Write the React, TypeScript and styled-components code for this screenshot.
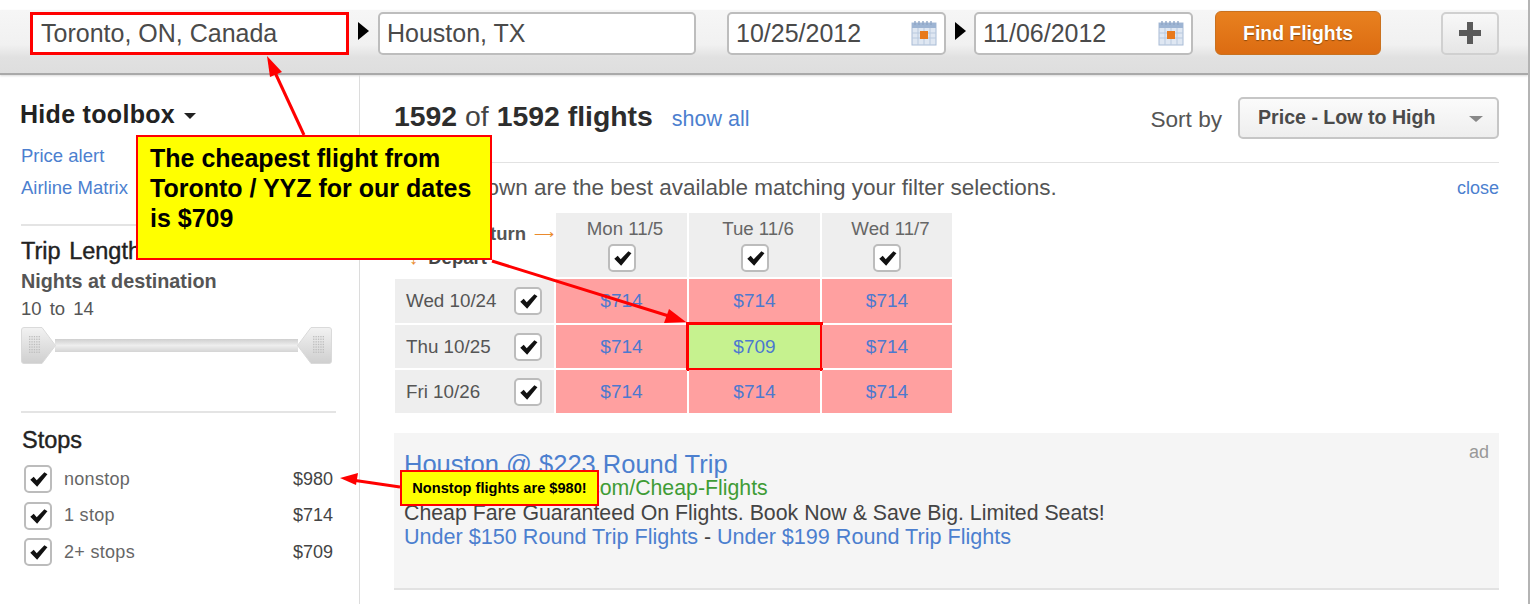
import { Fragment } from "react";
import styled, { createGlobalStyle } from "styled-components";

const GlobalStyle = createGlobalStyle`
  html, body {
    margin: 0;
    padding: 0;
    background: #fff;
  }
  body {
    font-family: "Liberation Sans", Arial, sans-serif;
    color: #333;
  }
`;

const Page = styled.div`
  position: relative;
  width: 1530px;
  height: 604px;
  padding-top: 10px;
  box-sizing: border-box;
  border-right: 2px solid #b4b4b4;
  overflow: hidden;
`;

const Toolbar = styled.div`
  display: flex;
  align-items: center;
  height: 65px;
  padding: 0 0 17px 30px;
  box-sizing: border-box;
  background: linear-gradient(#f6f6f6, #f1f1f1 55%, #e1e1e1 75%, #dedede);
  border-bottom: 2px solid #a9a9a9;
  box-shadow: 0 1px 2px rgba(0, 0, 0, 0.15);
`;

const Field = styled.div<{ $w: number; $hot?: boolean; $before?: number }>`
  display: flex;
  align-items: center;
  justify-content: space-between;
  width: ${(p) => p.$w}px;
  height: 43px;
  margin-left: ${(p) => p.$before ?? 0}px;
  box-sizing: border-box;
  padding: 0 7px 0 ${(p) => (p.$hot ? 8 : 7)}px;
  background: #fff;
  border: ${(p) => (p.$hot ? "3px solid #f00" : "2px solid #bdbdbd")};
  border-radius: ${(p) => (p.$hot ? 0 : 5)}px;
  font-size: 25px;
  color: #4a4a4a;
`;

const Triangle = styled.div<{ $left: number; $right: number }>`
  width: 0;
  height: 0;
  margin: -4px ${(p) => p.$right}px 0 ${(p) => p.$left}px;
  border-top: 9px solid transparent;
  border-bottom: 9px solid transparent;
  border-left: 11px solid #000;
`;

const FindButton = styled.div`
  display: flex;
  align-items: center;
  justify-content: center;
  width: 166px;
  height: 44px;
  margin-left: 22px;
  box-sizing: border-box;
  background: linear-gradient(#e8811f, #dc6c12);
  border: 1px solid #c9711f;
  border-radius: 6px;
  color: #fff;
  font-size: 19.4px;
  font-weight: 700;
  text-shadow: 0 1px 1px #8a4a10;
`;

const PlusButton = styled.div`
  display: flex;
  align-items: center;
  justify-content: center;
  width: 58px;
  height: 43px;
  margin-left: 60px;
  box-sizing: border-box;
  background: linear-gradient(#f8f8f8, #e6e6e6);
  border: 2px solid #d0d0d0;
  border-radius: 5px;
`;

const Body = styled.div`
  display: flex;
`;

const Sidebar = styled.aside`
  width: 360px;
  height: 530px;
  box-sizing: border-box;
  padding: 26px 23px 0 21px;
  border-right: 1px solid #dcdcdc;
`;

const ToolboxTitle = styled.div`
  display: flex;
  align-items: center;
  gap: 9px;
  margin-left: -1px;
  font-size: 25px;
  line-height: 26px;
  letter-spacing: 0.3px;
  font-weight: 700;
  color: #222;

  &::after {
    content: "";
    margin-top: 3px;
    border-top: 6px solid #222;
    border-left: 6px solid transparent;
    border-right: 6px solid transparent;
  }
`;

const SideLinks = styled.div`
  margin-top: 13px;
`;

const SideLink = styled.a`
  display: block;
  font-size: 18.5px;
  line-height: 32px;
  color: #4c7fcf;
`;

const Rule = styled.div<{ $top: number }>`
  height: 2px;
  margin-top: ${(p) => p.$top}px;
  background: #e4e4e4;
`;

const SectionTitle = styled.h3<{ $top: number; $left?: number }>`
  margin: ${(p) => p.$top}px 0 0 ${(p) => p.$left ?? 0}px;
  font-size: 23.5px;
  line-height: 26px;
  word-spacing: 2px;
  font-weight: 400;
  color: #222;
  -webkit-text-stroke: 0.4px #222;
`;

const SubLabel = styled.div`
  margin-top: 6px;
  font-size: 19.8px;
  line-height: 22px;
  font-weight: 700;
  color: #555;
`;

const RangeLabel = styled.div`
  margin-top: 6px;
  font-size: 18.5px;
  line-height: 22px;
  word-spacing: 3px;
  color: #555;
`;

const Slider = styled.div`
  display: flex;
  align-items: center;
  width: 311px;
  height: 37px;
  margin-top: 7px;
`;

const SliderTrack = styled.div`
  flex: 1;
  height: 13px;
  margin: 0 -1px;
  background: linear-gradient(#cfcfcf, #eeeeee 50%, #d4d4d4);
`;

const HandleSvg = styled.svg<{ $flip?: boolean }>`
  position: relative;
  flex: none;
  transform: ${(p) => (p.$flip ? "scaleX(-1)" : "none")};
`;

const StopList = styled.div`
  display: grid;
  grid-auto-rows: 36.5px;
  margin: 8px 3px 0 3px;
`;

const StopRow = styled.div`
  display: flex;
  align-items: center;
  font-size: 18px;
  color: #666;
`;

const StopName = styled.span`
  flex: 1;
  margin-left: 12px;
  letter-spacing: 0.3px;
`;

const StopPrice = styled.span`
  color: #444;
`;

const CheckBox = styled.span`
  display: inline-flex;
  flex: none;
  align-items: center;
  justify-content: center;
  width: 28px;
  height: 28px;
  box-sizing: border-box;
  background: #fff;
  border: 2px solid #bcbcbc;
  border-radius: 5px;
`;

const Main = styled.main`
  width: 1105px;
  margin-left: 34px;
`;

const ResultsHead = styled.div`
  display: flex;
  align-items: center;
  height: 42px;
  margin-top: 22px;
`;

const Count = styled.div`
  padding-bottom: 4px;
  font-size: 28.4px;
  color: #444;

  b {
    color: #2d2d2d;
  }
`;

const ShowAll = styled.a`
  flex: 1;
  margin-left: 19px;
  padding-top: 3px;
  font-size: 21.5px;
  color: #4c7fcf;
`;

const SortLabel = styled.span`
  margin-right: 16px;
  padding-top: 3px;
  font-size: 22.6px;
  color: #555;
`;

const SortSelect = styled.div`
  display: flex;
  align-items: center;
  justify-content: space-between;
  width: 261px;
  height: 42px;
  box-sizing: border-box;
  padding: 0 14px 2px 18px;
  background: linear-gradient(#fbfbfb, #eeeeee);
  border: 2px solid #c6c6c6;
  border-radius: 5px;
  font-size: 19.6px;
  font-weight: 700;
  color: #4a4a4a;

  &::after {
    content: "";
    margin-top: 3px;
    border-top: 6px solid #888;
    border-left: 7px solid transparent;
    border-right: 7px solid transparent;
  }
`;

const NoticeRow = styled.div`
  display: flex;
  align-items: center;
  justify-content: space-between;
  height: 51px;
  margin-top: 23px;
  border-top: 1px solid #e2e2e2;
  box-sizing: border-box;
  font-size: 22.5px;
  color: #555;
`;

const CloseLink = styled.a`
  font-size: 18px;
  color: #4c7fcf;
`;

const Matrix = styled.div`
  display: grid;
  grid-template-columns: 159px 131px 131px 130px;
  grid-template-rows: 64px 44px 43px 43px;
  gap: 2px;
  width: 559px;
  margin-left: 1px;
`;

const Corner = styled.div`
  display: flex;
  flex-direction: column;
  justify-content: flex-end;
  padding-bottom: 11px;
  box-sizing: border-box;
  font-size: 18.5px;
  font-weight: 700;
  color: #444;
`;

const ReturnLabel = styled.div`
  display: flex;
  justify-content: flex-end;
  align-items: center;
  gap: 8px;
  margin-bottom: 5px;
  color: #555;
`;

const DepartLabel = styled.div`
  display: flex;
  align-items: center;
  gap: 10px;
  padding-left: 14px;
  line-height: 16px;
`;

const ReturnArrow = styled.span`
  font-size: 14px;
  font-weight: 400;
  color: #ea8a2d;
`;

const DepartArrow = styled.span`
  font-weight: 400;
  color: #ea8a2d;
`;

const DayHead = styled.div`
  display: flex;
  flex-direction: column;
  align-items: center;
  gap: 4px;
  padding-top: 5px;
  box-sizing: border-box;
  background: #eeeeee;
  font-size: 18.7px;
  text-indent: 7px;
  color: #666;
`;

const DayRow = styled.div`
  display: flex;
  align-items: center;
  justify-content: space-between;
  padding: 0 12px 0 11px;
  background: #eeeeee;
  font-size: 18.8px;
  color: #555;
`;

const PriceCell = styled.a<{ $best?: boolean }>`
  display: flex;
  align-items: center;
  justify-content: center;
  background: ${(p) => (p.$best ? "#c6f28f" : "#ffa0a0")};
  outline: ${(p) => (p.$best ? "3px solid #f00" : "none")};
  font-size: 19px;
  color: #4c79cf;
`;

const AdBox = styled.section`
  display: flex;
  justify-content: space-between;
  height: 157px;
  margin-top: 20px;
  box-sizing: border-box;
  padding: 8px 10px 0 10px;
  background: #f5f5f5;
  border-bottom: 2px solid #e2e2e2;
`;

const AdBody = styled.div`
  padding-top: 11px;
  font-size: 21.3px;
  line-height: 24.5px;
`;

const AdTitle = styled.a`
  display: block;
  font-size: 25.5px;
  line-height: 24px;
  color: #4c7fcf;
`;

const AdUrl = styled.div`
  color: #3f9c35;
`;

const AdText = styled.div`
  color: #444;
`;

const AdLink = styled.a`
  font-size: 21.6px;
  color: #4c7fcf;
`;

const AdTag = styled.span`
  font-size: 18px;
  line-height: 22px;
  color: #999;
`;

const Callout = styled.div`
  position: absolute;
  left: 136px;
  top: 135px;
  width: 356px;
  height: 125px;
  box-sizing: border-box;
  padding: 6px 0 0 12px;
  background: #ff0;
  border: 2px solid #f00;
  font-size: 25px;
  line-height: 30px;
  font-weight: 700;
  color: #000;
`;

const SmallCallout = styled.div`
  position: absolute;
  left: 400px;
  top: 470px;
  display: flex;
  align-items: center;
  justify-content: center;
  width: 199px;
  height: 36px;
  box-sizing: border-box;
  background: #ff0;
  border: 2px solid #f00;
  font-size: 14.6px;
  font-weight: 700;
  color: #000;
`;

const ArrowLayer = styled.svg`
  position: absolute;
  left: 0;
  top: 0;
  pointer-events: none;
`;

function Tick() {
  return (
    <svg width="26" height="26" viewBox="0 0 28 28">
      <path d="M5 15 L9 11.5 L12.5 15.5 L21.5 6 L25 8.5 L13 23 Z" fill="#111" />
    </svg>
  );
}

function CalendarIcon() {
  return (
    <svg width="26" height="26" viewBox="0 0 26 26">
      <rect x="1" y="3" width="24" height="22" fill="#dfe7f2" stroke="#a9bcd6" />
      <rect x="1" y="3" width="24" height="5" fill="#9db4d3" />
      <path d="M4 1v4M8 1v4M12 1v4M16 1v4M20 1v4" stroke="#8fa6c6" strokeWidth="1.4" />
      <path d="M1 13h24M1 18h24M7 8v17M13 8v17M19 8v17" stroke="#b9c9de" />
      <rect x="9" y="11" width="8" height="8" fill="#e8791b" />
    </svg>
  );
}

function PlusIcon() {
  return (
    <svg width="24" height="24" viewBox="0 0 24 24">
      <path d="M9 1h6v8h8v6h-8v8H9v-8H1V9h8z" fill="#5a5a5a" />
    </svg>
  );
}

function SliderHandle({ flip }: { flip?: boolean }) {
  const dots = [];
  for (let x = 0; x < 5; x++) {
    for (let y = 0; y < 7; y++) {
      dots.push(<rect key={`${x}-${y}`} x={8 + x * 2.4} y={9 + y * 2.6} width="1.3" height="1.3" fill="#bdbdbd" />);
    }
  }
  return (
    <HandleSvg width="35" height="37" viewBox="0 0 35 37" $flip={flip}>
      <defs>
        <linearGradient id="handleFill" x1="0" y1="0" x2="0" y2="1">
          <stop offset="0" stopColor="#f2f2f2" />
          <stop offset="1" stopColor="#cfcfcf" />
        </linearGradient>
      </defs>
      <path
        d="M3 0.5 H21 L34.5 18.5 L21 36.5 H3 Q0.5 36.5 0.5 34 V3 Q0.5 0.5 3 0.5 Z"
        fill="url(#handleFill)"
        stroke="#dadada"
      />
      {dots}
    </HandleSvg>
  );
}

const days = ["Mon 11/5", "Tue 11/6", "Wed 11/7"];
const rows = [
  { day: "Wed 10/24", prices: ["$714", "$714", "$714"] },
  { day: "Thu 10/25", prices: ["$714", "$709", "$714"] },
  { day: "Fri 10/26", prices: ["$714", "$714", "$714"] },
];
const stops = [
  { name: "nonstop", price: "$980" },
  { name: "1 stop", price: "$714" },
  { name: "2+ stops", price: "$709" },
];

export default function App() {
  return (
    <Page>
      <GlobalStyle />
      <Toolbar>
        <Field $w={319} $hot>Toronto, ON, Canada</Field>
        <Triangle $left={9} $right={9} />
        <Field $w={318}>Houston, TX</Field>
        <Field $w={219} $before={31}>
          10/25/2012
          <CalendarIcon />
        </Field>
        <Triangle $left={9} $right={8} />
        <Field $w={219}>
          11/06/2012
          <CalendarIcon />
        </Field>
        <FindButton>Find Flights</FindButton>
        <PlusButton>
          <PlusIcon />
        </PlusButton>
      </Toolbar>
      <Body>
        <Sidebar>
          <ToolboxTitle>Hide toolbox</ToolboxTitle>
          <SideLinks>
            <SideLink>Price alert</SideLink>
            <SideLink>Airline Matrix</SideLink>
          </SideLinks>
          <Rule $top={20} />
          <SectionTitle $top={12}>Trip Length</SectionTitle>
          <SubLabel>Nights at destination</SubLabel>
          <RangeLabel>10 to 14</RangeLabel>
          <Slider>
            <SliderHandle />
            <SliderTrack />
            <SliderHandle flip />
          </Slider>
          <Rule $top={47} />
          <SectionTitle $top={14} $left={1}>Stops</SectionTitle>
          <StopList>
            {stops.map((s) => (
              <StopRow key={s.name}>
                <CheckBox><Tick /></CheckBox>
                <StopName>{s.name}</StopName>
                <StopPrice>{s.price}</StopPrice>
              </StopRow>
            ))}
          </StopList>
        </Sidebar>
        <Main>
          <ResultsHead>
            <Count><b>1592</b> of <b>1592 flights</b></Count>
            <ShowAll>show all</ShowAll>
            <SortLabel>Sort by</SortLabel>
            <SortSelect>Price - Low to High</SortSelect>
          </ResultsHead>
          <NoticeRow>
            <span>Prices shown are the best available matching your filter selections.</span>
            <CloseLink>close</CloseLink>
          </NoticeRow>
          <Matrix>
            <Corner>
              <ReturnLabel>Return <ReturnArrow>⟶</ReturnArrow></ReturnLabel>
              <DepartLabel><DepartArrow>↓</DepartArrow> Depart</DepartLabel>
            </Corner>
            {days.map((d) => (
              <DayHead key={d}>
                {d}
                <CheckBox><Tick /></CheckBox>
              </DayHead>
            ))}
            {rows.map((r) => (
              <Fragment key={r.day}>
                <DayRow>
                  {r.day}
                  <CheckBox><Tick /></CheckBox>
                </DayRow>
                {r.prices.map((p, i) => (
                  <PriceCell key={i} $best={p === "$709"}>{p}</PriceCell>
                ))}
              </Fragment>
            ))}
          </Matrix>
          <AdBox>
            <AdBody>
              <AdTitle>Houston @ $223 Round Trip</AdTitle>
              <AdUrl>www.Flights-Travel.com/Cheap-Flights</AdUrl>
              <AdText>Cheap Fare Guaranteed On Flights. Book Now &amp; Save Big. Limited Seats!</AdText>
              <div>
                <AdLink>Under $150 Round Trip Flights</AdLink>
                <AdText as="span"> - </AdText>
                <AdLink>Under $199 Round Trip Flights</AdLink>
              </div>
            </AdBody>
            <AdTag>ad</AdTag>
          </AdBox>
        </Main>
      </Body>
      <ArrowLayer width="1533" height="604" viewBox="0 0 1533 604">
        <g stroke="#f00" strokeWidth="3" fill="#f00">
          <line x1="304" y1="135" x2="272" y2="66" />
          <polygon points="267,56 282,72 270,77" stroke="none" />
          <line x1="492" y1="261" x2="672" y2="317" />
          <polygon points="686,322 664,323 669,309" stroke="none" />
          <line x1="400" y1="487" x2="352" y2="480" />
          <polygon points="340,478 358,473 356,485" stroke="none" />
        </g>
      </ArrowLayer>
      <Callout>
        The cheapest flight from
        <br />
        Toronto / YYZ for our dates
        <br />
        is $709
      </Callout>
      <SmallCallout>Nonstop flights are $980!</SmallCallout>
    </Page>
  );
}
